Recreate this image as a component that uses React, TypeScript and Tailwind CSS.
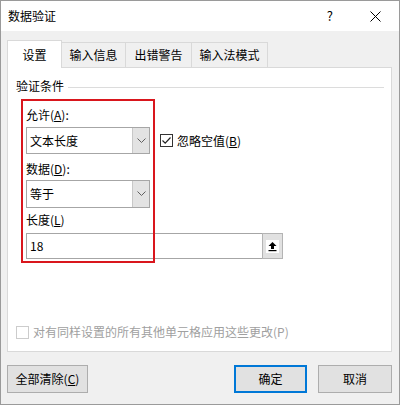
import React from "react";

function Chevron() {
  return (
    <svg width="9" height="6" viewBox="0 0 9 6" className="text-[#606060]">
      <path d="M0.5 0.5 L4.5 4.5 L8.5 0.5" fill="none" stroke="currentColor" strokeWidth="1" />
    </svg>
  );
}

function Combo({ value }: { value: string }) {
  return (
    <div className="flex w-[124px] border border-[#a6a6a6] bg-white">
      <div className="flex-1 pl-[3px] flex items-center">{value}</div>
      <div className="w-[17px] bg-[#e3e3e3] border-l border-[#c8c8c8] flex items-center justify-center">
        <Chevron />
      </div>
    </div>
  );
}

function Tab({ label, w, active }: { label: string; w: string; active?: boolean }) {
  if (active) {
    return (
      <div className={`${w} h-[28px] -mb-px bg-white border border-b-0 border-[#d9d9d9] flex items-center justify-center relative z-10`}>
        {label}
      </div>
    );
  }
  return (
    <div className={`${w} h-[25px] bg-[#f0f0f0] border border-l-0 border-b-0 border-[#d9d9d9] flex items-center justify-center`}>
      {label}
    </div>
  );
}

export default function App() {
  return (
    <div
      className="w-[400px] h-[405px] bg-[#f0f0f0] border border-[#9a9a9a] flex flex-col text-[12px] leading-[16px] text-black"
      style={{ fontFamily: '"Noto Sans CJK SC", "Noto Sans", sans-serif' }}
    >
      {/* title bar */}
      <div className="h-[30px] bg-white flex items-center pl-[7px] shrink-0">
        <span>数据验证</span>
        <span className="ml-auto text-[13px]">?</span>
        <svg width="11" height="11" viewBox="0 0 11 11" className="ml-[37px] mr-[18px]">
          <path d="M0.5 0.5 L10.5 10.5 M10.5 0.5 L0.5 10.5" stroke="#000" strokeWidth="1" />
        </svg>
      </div>

      <div className="ml-[6px] mr-[7px] pt-[9px]">
        {/* tabs */}
        <div className="flex items-end h-[27px]">
          <Tab label="设置" w="w-[55px]" active />
          <Tab label="输入信息" w="w-[64px]" />
          <Tab label="出错警告" w="w-[66px]" />
          <Tab label="输入法模式" w="w-[76px]" />
        </div>

        {/* panel */}
        <div className="relative h-[285px] bg-white border border-[#d9d9d9] pl-[8px]">
          <div className="flex items-center mt-[10px]">
            <span>验证条件</span>
            <div className="flex-1 h-px bg-[#dcdcdc] ml-[4px] mr-[7px] mt-[2px]" />
          </div>

          <div className="pl-[10px]">
            <div className="mt-[13px]">
              允许(<u>A</u>):
            </div>
            <div className="flex items-center mt-[4px] h-[27px]">
              <div className="h-[27px] flex">
                <Combo value="文本长度" />
              </div>
              <div className="ml-[10px] w-[13px] h-[13px] border border-[#333] bg-white flex items-center justify-center">
                <svg width="11" height="11" viewBox="0 0 11 11">
                  <path d="M1.5 5.5 L4.2 8.2 L9.5 2.5" fill="none" stroke="#222" strokeWidth="1.2" />
                </svg>
              </div>
              <span className="ml-[4px]">
                忽略空值(<u>B</u>)
              </span>
            </div>

            <div className="mt-[7px]">
              数据(<u>D</u>):
            </div>
            <div className="h-[28px] flex mt-[3px]">
              <Combo value="等于" />
            </div>

            <div className="mt-[4px]">
              长度(<u>L</u>)
            </div>
            <div className="flex mt-[5px] h-[26px]">
              <div className="w-[236px] border border-[#a6a6a6] border-r-0 bg-white flex items-center pl-[3px]">18</div>
              <div className="w-[21px] bg-[#e1e1e1] border border-[#b4b4b4] flex items-center justify-center">
                <div className="w-[13px] h-[13px] bg-white flex items-center justify-center">
                  <svg width="11" height="11" viewBox="0 0 11 11">
                    <path d="M5.5 1 L1.5 5 H4 V8 H7 V5 H9.5 Z" fill="#000" />
                    <rect x="1.5" y="9" width="8" height="1.2" fill="#000" />
                  </svg>
                </div>
              </div>
            </div>
          </div>

          <div className="flex items-center mt-[65px] text-[#a0a0a0]">
            <div className="w-[13px] h-[13px] border border-[#cccccc] bg-white" />
            <span className="ml-[4px]">对有同样设置的所有其他单元格应用这些更改(P)</span>
          </div>

          {/* annotation */}
          <div className="absolute left-[13px] top-[31px] w-[134px] h-[164px] border-2 border-[#d9161d] pointer-events-none" />
        </div>
      </div>

      {/* buttons */}
      <div className="flex mt-[13px] ml-[6px] mr-[7px] h-[28px]">
        <div className="w-[81px] bg-[#e1e1e1] border border-[#adadad] flex items-center justify-center">
          全部清除(<u>C</u>)
        </div>
        <div className="ml-auto w-[73px] bg-[#e1e1e1] border-2 border-[#0078d7] flex items-center justify-center">
          确定
        </div>
        <div className="ml-[11px] w-[74px] bg-[#e1e1e1] border border-[#adadad] flex items-center justify-center">
          取消
        </div>
      </div>
    </div>
  );
}
